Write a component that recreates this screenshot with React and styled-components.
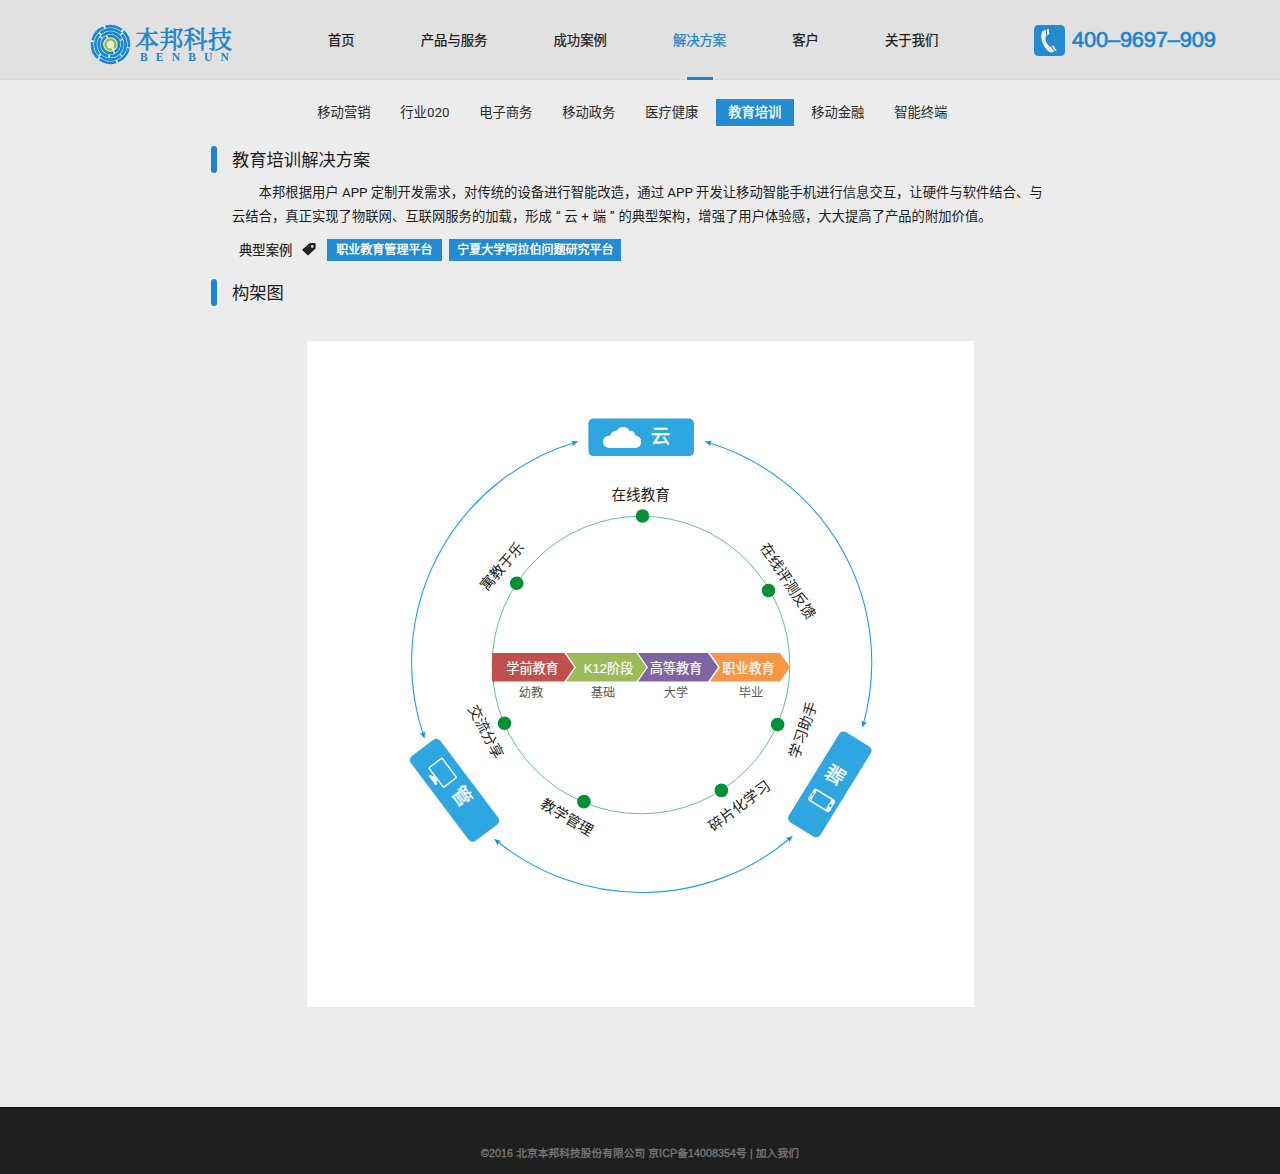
import styled, { createGlobalStyle } from "styled-components";

const GlobalStyle = createGlobalStyle`
  html, body {
    margin: 0;
    padding: 0;
    background: #ececec;
    overflow-x: hidden;
  }
  body {
    font-family: "Liberation Sans", "Noto Sans CJK SC", sans-serif;
    font-size: 13.33px;
    color: #1c1c1c;
  }
`;

const menu = ["首页", "产品与服务", "成功案例", "解决方案", "客户", "关于我们"];

const solutions = [
  "移动营销",
  "行业020",
  "电子商务",
  "移动政务",
  "医疗健康",
  "教育培训",
  "移动金融",
  "智能终端",
];

const dots = [
  [642.5, 516],
  [516.7, 583.3],
  [768.5, 590.5],
  [504.5, 723.3],
  [777.6, 724.5],
  [583.9, 801.6],
  [721.4, 790.4],
];

const labels = [
  { text: "在线教育", x: 640.7, y: 494.3, angle: 0 },
  { text: "寓教于乐", x: 501.7, y: 566.3, angle: -49 },
  { text: "在线评测反馈", x: 788, y: 580.9, angle: 56.6 },
  { text: "交流分享", x: 486, y: 731.7, angle: 62 },
  { text: "教学管理", x: 567, y: 817, angle: 30.6 },
  { text: "碎片化学习", x: 739.2, y: 805.7, angle: -37 },
  { text: "学习助手", x: 803, y: 729.8, angle: -71 },
];

const phases = [
  { text: "学前教育", x: 532.5, sub: "幼教", subX: 531, color: "#c0504d", points: "492,653 564.3,653 574.3,667.3 564.3,681.6 492,681.6" },
  { text: "K12阶段", x: 608.5, sub: "基础", subX: 603, color: "#9bbb59", points: "566,653 636.5,653 646.5,667.3 636.5,681.6 566,681.6 576,667.3" },
  { text: "高等教育", x: 676, sub: "大学", subX: 676, color: "#8064a2", points: "638,653 708,653 718,667.3 708,681.6 638,681.6 648,667.3" },
  { text: "职业教育", x: 748.5, sub: "毕业", subX: 751, color: "#f79646", points: "710,653 780,653 790,667.3 780,681.6 710,681.6 720,667.3" },
];

function LogoMark() {
  return (
    <svg width="41" height="41" viewBox="-20.5 -20.5 41 41" fill="none">
      <circle r="20" fill="#e4edf3" />
      <g stroke="#1c86cf" strokeWidth="2.7">
        <circle r="18.4" strokeDasharray="17.3 2" transform="rotate(12)" />
        <circle r="15.1" strokeDasharray="21.9 1.8" transform="rotate(48)" />
        <circle r="11.8" strokeDasharray="22.9 1.8" transform="rotate(-20)" />
        <circle r="8.6" strokeDasharray="25.2 1.8" transform="rotate(70)" />
      </g>
      <circle r="5" stroke="#94c11f" strokeWidth="2.4" strokeDasharray="28 3.4" transform="rotate(75)" />
    </svg>
  );
}

function PhoneIcon() {
  return (
    <svg width="31" height="31" viewBox="0 0 31 31">
      <rect width="31" height="31" rx="4.5" fill="#258bd0" />
      <g fill="#f1f1f1">
        <path d="M8.2 6.2 L11.8 4.8 L12.2 11 Q10.6 13.5 12.3 17.2 Q14.2 21.3 16.7 21.4 L20.2 26.7 Q17.6 28.2 15 26.8 Q9.8 22.8 7.8 15.5 Q6.5 10.2 8.2 6.2Z" />
        <path d="M12.8 4.2 L14.8 3.8 L15.3 9 L13.2 10.5Z" />
        <path d="M17.7 20.9 L19.3 20.4 L22.8 25.3 L21 26.3Z" />
      </g>
    </svg>
  );
}

function TagIcon() {
  return (
    <svg width="14" height="13" viewBox="0 0 14 13">
      <path
        fill="#222"
        fillRule="evenodd"
        d="M7.3 .5 Q7.8 0 8.5 0 H12.3 Q13.6 0 13.6 1.3 V4.7 Q13.6 5.4 13.1 5.9 L6.7 12.1 Q6 12.8 5.3 12.1 L.6 7.6 Q0 6.9 .6 6.2Z M10.3 2.1 A1.3 1.3 0 1 0 10.3 4.7 A1.3 1.3 0 1 0 10.3 2.1Z"
      />
    </svg>
  );
}

function Diagram() {
  return (
    <Chart viewBox="307 341 667 666">
      <defs>
        <marker id="arrow" viewBox="0 0 8 8" refX="6" refY="4" markerWidth="6.5" markerHeight="6.5" markerUnits="userSpaceOnUse" orient="auto-start-reverse">
          <path d="M0 .6 L8 4 L0 7.4 L1.2 4Z" fill="#0d96e6" />
        </marker>
      </defs>

      <g fill="none" stroke="#1ba0ea" strokeWidth="1.1">
        <path d="M424 737 A229.8 229.8 0 0 1 576.5 442" markerStart="url(#arrow)" markerEnd="url(#arrow)" />
        <path d="M706.5 442 A229.8 229.8 0 0 1 862.8 726" markerStart="url(#arrow)" markerEnd="url(#arrow)" />
        <path d="M791.5 837 A229.8 229.8 0 0 1 495.5 840" markerStart="url(#arrow)" markerEnd="url(#arrow)" />
      </g>

      <circle cx="641" cy="665" r="148.8" fill="none" stroke="#6cc08b" />
      {dots.map(([x, y]) => (
        <circle key={x} cx={x} cy={y} r="6.8" fill="#009036" />
      ))}

      {labels.map((l) => (
        <Label key={l.text} transform={`translate(${l.x} ${l.y}) rotate(${l.angle})`} dy="5.4">
          {l.text}
        </Label>
      ))}

      {phases.map((p) => (
        <g key={p.text}>
          <polygon points={p.points} fill={p.color} />
          <Phase x={p.x} y="672.6">{p.text}</Phase>
          <Sub x={p.subX} y="696.5">{p.sub}</Sub>
        </g>
      ))}

      <g transform="translate(641.2 437.3)">
        <Node x="-52.8" y="-18.8" width="105.6" height="37.6" rx="5" />
        <path
          fill="#fff"
          d="M-32.2 10.7 Q-38.2 9.8 -38.2 4.2 Q-38 -1.4 -31 -1.9 Q-29.5 -7 -24.3 -6.6 Q-22.5 -10.3 -18 -10.3 Q-13.5 -10.3 -11.8 -6.6 Q-6.5 -6.8 -5.8 -1.8 Q-.2 -1 0 4.5 Q0 9.8 -5.8 10.7Z"
        />
        <NodeText x="19.3" y="5.8">云</NodeText>
      </g>

      <g transform="translate(454.5 790.3) rotate(53)">
        <Node x="-53" y="-18.5" width="106" height="37" rx="5" />
        <rect x="-33.3" y="-9.4" width="24.3" height="16.4" rx=".8" fill="none" stroke="#fff" strokeWidth="1.4" />
        <path fill="#fff" d="M-24.5 6.5 H-18 V9.5 H-15.5 V12 H-27 V9.5 H-24.5Z" />
        <NodeText x="9" y="4.5">管</NodeText>
      </g>

      <g transform="translate(829.8 784.4) rotate(-58.3)">
        <Node x="-53" y="-18.5" width="106" height="37" rx="5" />
        <path
          fill="#fff"
          fillRule="evenodd"
          d="M-22.5 -11 H-13 Q-10.6 -11 -10.6 -8.6 V11.6 Q-10.6 14 -13 14 H-22.5 Q-24.9 14 -24.9 11.6 V-8.6 Q-24.9 -11 -22.5 -11Z M-23.3 -7.6 V9.4 H-12.2 V-7.6Z M-19.8 -9.8 V-8.8 H-15.7 V-9.8Z M-19.3 10.8 V12.6 H-16.2 V10.8Z"
        />
        <NodeText x="10.9" y="7">端</NodeText>
      </g>
    </Chart>
  );
}

export default function App() {
  return (
    <>
      <GlobalStyle />
      <Header>
        <Logo>
          <LogoMark />
          <LogoWords>
            <LogoName>本邦科技</LogoName>
            <LogoLatin>BENBUN</LogoLatin>
          </LogoWords>
        </Logo>
        <Menu>
          {menu.map((item) => (
            <MenuItem key={item} $active={item === "解决方案"}>{item}</MenuItem>
          ))}
        </Menu>
        <Hotline>
          <PhoneIcon />
          <HotlineNumber>400–9697–909</HotlineNumber>
        </Hotline>
      </Header>

      <SubMenu>
        {solutions.map((item) => (
          <SubItem key={item} $active={item === "教育培训"}>{item}</SubItem>
        ))}
      </SubMenu>

      <Content>
        <Title>教育培训解决方案</Title>
        <Intro>
          <FirstLine>本邦根据用户 APP 定制开发需求，对传统的设备进行智能改造，通过 APP 开发让移动智能手机进行信息交互，让硬件与软件结合、与</FirstLine>
          <Line>云结合，真正实现了物联网、互联网服务的加载，形成 “ 云 + 端 ” 的典型架构，增强了用户体验感，大大提高了产品的附加价值。</Line>
        </Intro>
        <Cases>
          <CasesName>典型案例</CasesName>
          <TagIcon />
          <CaseLinks>
            <CaseLink>职业教育管理平台</CaseLink>
            <CaseLink>宁夏大学阿拉伯问题研究平台</CaseLink>
          </CaseLinks>
        </Cases>
        <Title>构架图</Title>
      </Content>

      <Diagram />

      <Footer>©2016 北京本邦科技股份有限公司 京ICP备14008354号 | 加入我们</Footer>
    </>
  );
}

const Header = styled.header`
  display: flex;
  height: 80px;
  box-sizing: border-box;
  padding-left: 90px;
  background: #e1e1e1;
  border-bottom: 1px solid #d9d9d9;
`;

const Logo = styled.div`
  display: flex;
  width: 238px;
  padding-top: 24px;
  gap: 4px;
`;

const LogoWords = styled.div`
  display: flex;
  flex-direction: column;
  color: #1c86cf;
`;

const LogoName = styled.div`
  font-family: "Noto Serif CJK SC", "Noto Sans CJK SC", serif;
  font-size: 24px;
  line-height: 27px;
  letter-spacing: 0.3px;
  -webkit-text-stroke: 0.7px #1c86cf;
  white-space: nowrap;
`;

const LogoLatin = styled.div`
  padding: 1px 0 0 5px;
  font-family: "Liberation Serif", serif;
  font-size: 11.5px;
  font-weight: bold;
  line-height: 11px;
  letter-spacing: 8.2px;
`;

const Menu = styled.nav`
  display: flex;
  gap: 66.1px;
  width: 706px;
`;

const MenuItem = styled.a`
  position: relative;
  line-height: 81px;
  height: 79px;
  white-space: nowrap;
  color: ${(p) => (p.$active ? "#1a86d2" : "#1c1c1c")};
  -webkit-text-stroke: 0.25px;

  &::after {
    content: "";
    display: ${(p) => (p.$active ? "block" : "none")};
    position: absolute;
    left: 50%;
    bottom: -1px;
    width: 26px;
    height: 3px;
    margin-left: -13px;
    background: #1a86d2;
  }
`;

const Hotline = styled.div`
  display: flex;
  gap: 7px;
  padding-top: 24.5px;
`;

const HotlineNumber = styled.span`
  font-size: 21.8px;
  line-height: 29px;
  color: #1a86d2;
  letter-spacing: -0.15px;
  -webkit-text-stroke: 0.7px #1a86d2;
  white-space: nowrap;
`;

const SubMenu = styled.nav`
  display: flex;
  gap: 5.1px;
  padding: 19px 0 0 305px;
`;

const SubItem = styled.a`
  height: 27px;
  padding: 0 12.3px;
  font-family: Roboto, "Noto Sans CJK SC", sans-serif;
  line-height: 28px;
  white-space: nowrap;
  color: ${(p) => (p.$active ? "#fff" : "#2b2b2b")};
  background: ${(p) => (p.$active ? "#258bd0" : "transparent")};
  -webkit-text-stroke: ${(p) => (p.$active ? "0.3px" : "0")};
`;

const Content = styled.main`
  height: 195px;
  box-sizing: content-box;
  padding: 20px 0 0 211px;
`;

const Title = styled.h2`
  display: flex;
  gap: 15px;
  height: 27px;
  margin: 0;
  font-size: 17.3px;
  font-weight: normal;
  line-height: 29px;

  &::before {
    content: "";
    width: 6px;
    height: 27px;
    border-radius: 3px;
    background: #1a86d2;
  }
`;

const Intro = styled.div`
  margin: 8px 0 0 21px;
  font-family: Roboto, "Noto Sans CJK SC", sans-serif;
  line-height: 24px;
  white-space: nowrap;
`;

const Line = styled.div`
  word-spacing: 0.5px;
`;

const FirstLine = styled(Line)`
  padding-left: 26.7px;
  word-spacing: 0;
`;

const Cases = styled.div`
  display: flex;
  align-items: center;
  height: 23px;
  margin: 9px 0 18px 28px;
`;

const CasesName = styled.span`
  margin-right: 10px;
  -webkit-text-stroke: 0.15px;
`;

const CaseLinks = styled.div`
  display: flex;
  gap: 7px;
  margin-left: 11px;
`;

const CaseLink = styled.a`
  height: 22px;
  padding: 0 9.6px 0 9px;
  font-size: 12.03px;
  line-height: 23px;
  color: #fff;
  background: #258bd0;
  -webkit-text-stroke: 0.4px #fff;

  & + & {
    padding: 0 7.5px 0 8.3px;
  }
`;

const Chart = styled.svg`
  display: block;
  width: 667px;
  height: 666px;
  margin: 0 0 0 307px;
  background: #fff;
`;

const Label = styled.text`
  font-size: 14.6px;
  text-anchor: middle;
  fill: #1c1c1c;
`;

const Phase = styled.text`
  font-size: 13.1px;
  text-anchor: middle;
  fill: #fff;
  stroke: #fff;
  stroke-width: 0.2px;
`;

const Sub = styled.text`
  font-size: 12.2px;
  text-anchor: middle;
  fill: #595959;
`;

const Node = styled.rect`
  fill: #2ea7e0;
`;

const NodeText = styled.text`
  font-size: 19.5px;
  text-anchor: middle;
  fill: #fff;
  stroke: #fff;
  stroke-width: 0.4px;
`;

const Footer = styled.footer`
  height: 67px;
  box-sizing: border-box;
  margin-top: 100px;
  padding-top: 35px;
  background: #1f1f1f;
  border-top: 1px solid #0c0c0c;
  font-size: 10.67px;
  line-height: 20px;
  letter-spacing: 0.1px;
  text-align: center;
  color: #777;
  -webkit-text-stroke: 0.35px #777;
`;
